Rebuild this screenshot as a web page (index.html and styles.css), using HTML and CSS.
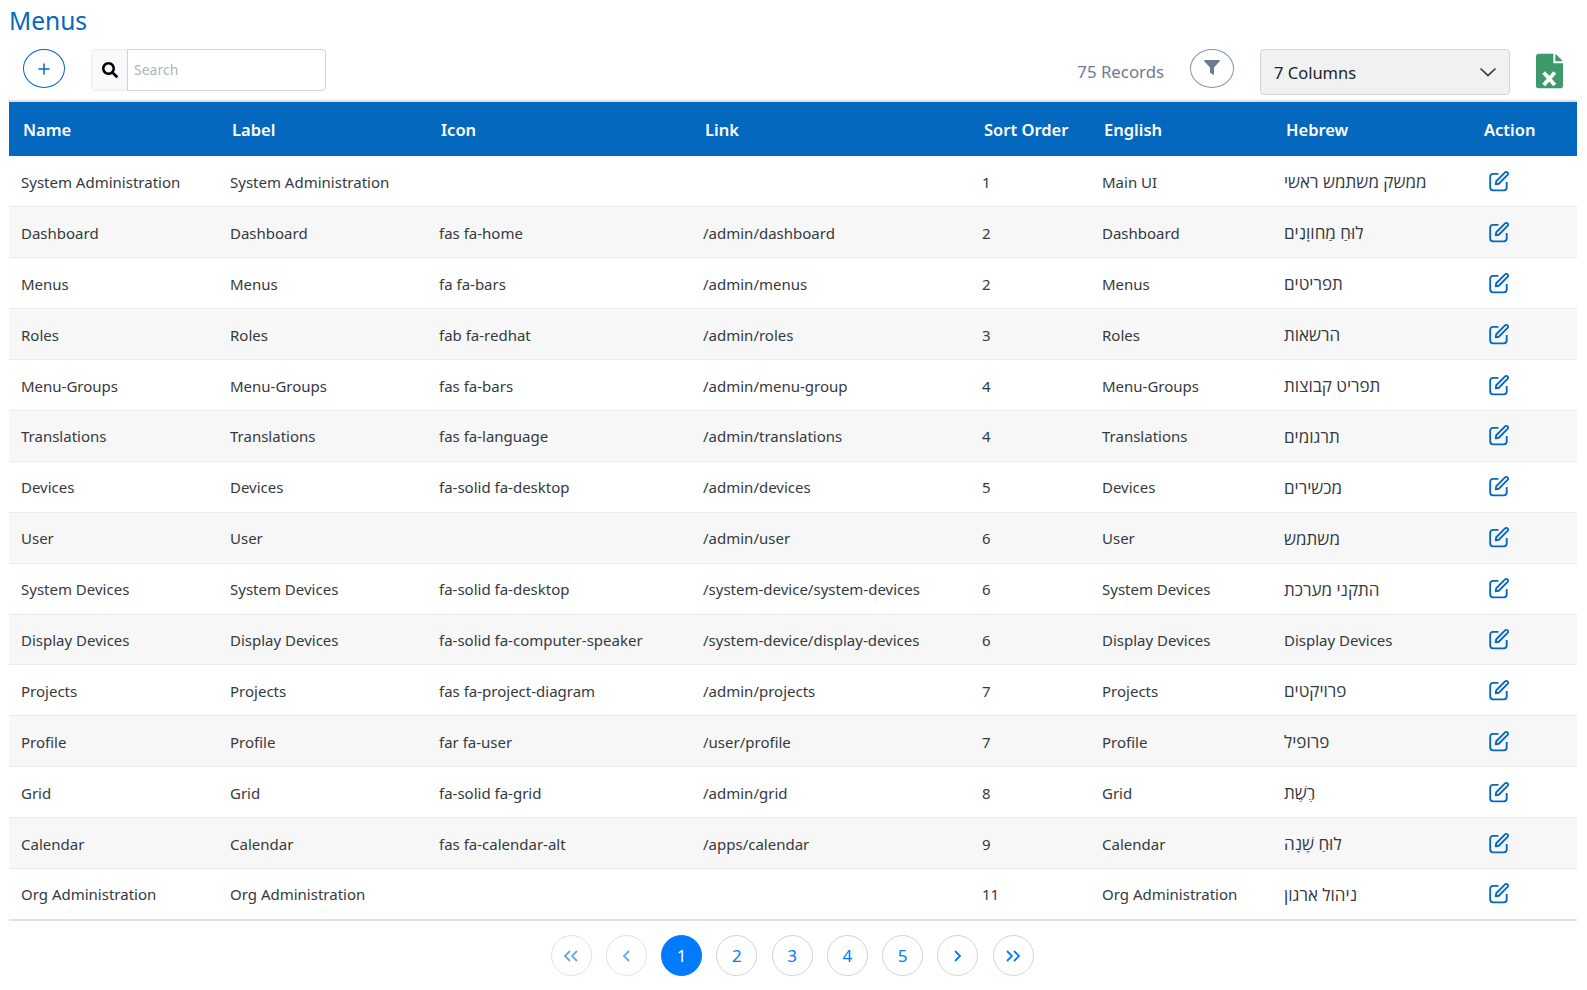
FILE: index.html
```html
<!DOCTYPE html>
<html lang="en">
<head>
<meta charset="utf-8">
<title>Menus</title>
<link rel="stylesheet" href="styles.css">
</head>
<body>
<main class="page">
<h1 class="title">Menus</h1>
<div class="toolbar">
  <button class="add-btn" aria-label="Add"><svg width="14" height="14" viewBox="0 0 14 14"><path d="M7 1.500v11M1.500 7h11" fill="none" stroke="#0468bf" stroke-width="1.500"/></svg></button>
  <div class="search">
    <span class="search-icon"><svg width="16" height="16" viewBox="0 0 512 512"><path fill="#000" d="M505 442.700L405.300 343c-4.500-4.500-10.600-7-17-7H372c27.600-35.300 44-79.700 44-128C416 93.100 322.900 0 208 0S0 93.100 0 208s93.100 208 208 208c48.300 0 92.700-16.400 128-44v16.300c0 6.400 2.500 12.500 7 17l99.700 99.700c9.400 9.400 24.600 9.400 33.900 0l28.300-28.300c9.400-9.400 9.400-24.600.1-34zM208 336c-70.700 0-128-57.200-128-128 0-70.700 57.200-128 128-128 70.700 0 128 57.200 128 128 0 70.700-57.200 128-128 128z"/></svg></span>
    <input class="search-input" type="text" placeholder="Search">
  </div>
  <div class="toolbar-right">
    <span class="records">75 Records</span>
    <button class="filter-btn" aria-label="Filter"><svg width="16" height="15" viewBox="0 0 16 15"><path fill="#6c7a94" d="M.8 0h14.400c.7 0 1 .8.500 1.300L10 7.500V14c0 .7-.8 1-1.300.6L6.400 12.800a1 1 0 0 1-.4-.8V7.500L.3 1.300C-.2.800.1 0 .8 0z"/></svg></button>
    <div class="columns-select"><span>7 Columns</span><svg width="18" height="16" viewBox="0 0 18 16"><path d="M1.500 4.500 9 11.500l7.500-7" fill="none" stroke="#343a40" stroke-width="1.700"/></svg></div>
    <svg class="excel" width="28" height="36" viewBox="0 0 28 36"><path fill="#3f9a6b" d="M3 0h15v10h10v23a3 3 0 0 1-3 3H3a3 3 0 0 1-3-3V3a3 3 0 0 1 3-3z"/><path fill="#3f9a6b" d="M20 0l8 8h-8z"/><path d="M8 19.500 19.500 32.500M19.500 19.500 8 32.500" fill="none" stroke="#fff" stroke-width="4"/></svg>
  </div>
</div>
<table class="grid">
<colgroup>
<col class="c-name"><col class="c-label"><col class="c-icon"><col class="c-link"><col class="c-sort"><col class="c-eng"><col class="c-heb"><col class="c-act">
</colgroup>
<thead>
<tr><th>Name</th><th>Label</th><th>Icon</th><th>Link</th><th>Sort Order</th><th>English</th><th>Hebrew</th><th>Action</th></tr>
</thead>
<tbody>
<tr><td>System Administration</td><td>System Administration</td><td></td><td></td><td>1</td><td>Main UI</td><td class="he">ממשק משתמש ראשי</td><td><svg class="edit"><use href="#edit"/></svg></td></tr>
<tr><td>Dashboard</td><td>Dashboard</td><td>fas fa-home</td><td>/admin/dashboard</td><td>2</td><td>Dashboard</td><td class="he">לוּחַ מַחווָנִים</td><td><svg class="edit"><use href="#edit"/></svg></td></tr>
<tr><td>Menus</td><td>Menus</td><td>fa fa-bars</td><td>/admin/menus</td><td>2</td><td>Menus</td><td class="he">תפריטים</td><td><svg class="edit"><use href="#edit"/></svg></td></tr>
<tr><td>Roles</td><td>Roles</td><td>fab fa-redhat</td><td>/admin/roles</td><td>3</td><td>Roles</td><td class="he">הרשאות</td><td><svg class="edit"><use href="#edit"/></svg></td></tr>
<tr><td>Menu-Groups</td><td>Menu-Groups</td><td>fas fa-bars</td><td>/admin/menu-group</td><td>4</td><td>Menu-Groups</td><td class="he">תפריט קבוצות</td><td><svg class="edit"><use href="#edit"/></svg></td></tr>
<tr><td>Translations</td><td>Translations</td><td>fas fa-language</td><td>/admin/translations</td><td>4</td><td>Translations</td><td class="he">תרגומים</td><td><svg class="edit"><use href="#edit"/></svg></td></tr>
<tr><td>Devices</td><td>Devices</td><td>fa-solid fa-desktop</td><td>/admin/devices</td><td>5</td><td>Devices</td><td class="he">מכשירים</td><td><svg class="edit"><use href="#edit"/></svg></td></tr>
<tr><td>User</td><td>User</td><td></td><td>/admin/user</td><td>6</td><td>User</td><td class="he">משתמש</td><td><svg class="edit"><use href="#edit"/></svg></td></tr>
<tr><td>System Devices</td><td>System Devices</td><td>fa-solid fa-desktop</td><td>/system-device/system-devices</td><td>6</td><td>System Devices</td><td class="he">התקני מערכת</td><td><svg class="edit"><use href="#edit"/></svg></td></tr>
<tr><td>Display Devices</td><td>Display Devices</td><td>fa-solid fa-computer-speaker</td><td>/system-device/display-devices</td><td>6</td><td>Display Devices</td><td>Display Devices</td><td><svg class="edit"><use href="#edit"/></svg></td></tr>
<tr><td>Projects</td><td>Projects</td><td>fas fa-project-diagram</td><td>/admin/projects</td><td>7</td><td>Projects</td><td class="he">פרויקטים</td><td><svg class="edit"><use href="#edit"/></svg></td></tr>
<tr><td>Profile</td><td>Profile</td><td>far fa-user</td><td>/user/profile</td><td>7</td><td>Profile</td><td class="he">פרופיל</td><td><svg class="edit"><use href="#edit"/></svg></td></tr>
<tr><td>Grid</td><td>Grid</td><td>fa-solid fa-grid</td><td>/admin/grid</td><td>8</td><td>Grid</td><td class="he">רֶשֶׁת</td><td><svg class="edit"><use href="#edit"/></svg></td></tr>
<tr><td>Calendar</td><td>Calendar</td><td>fas fa-calendar-alt</td><td>/apps/calendar</td><td>9</td><td>Calendar</td><td class="he">לוּחַ שָׁנָה</td><td><svg class="edit"><use href="#edit"/></svg></td></tr>
<tr><td>Org Administration</td><td>Org Administration</td><td></td><td></td><td>11</td><td>Org Administration</td><td class="he">ניהול ארגון</td><td><svg class="edit"><use href="#edit"/></svg></td></tr>
</tbody>
</table>
<nav class="pager">
  <a class="page-btn muted"><svg width="16" height="12" viewBox="0 0 16 12"><path d="M7 1 2 6l5 5M14 1 9 6l5 5" fill="none" stroke="currentColor" stroke-width="1.800"/></svg></a>
  <a class="page-btn muted"><svg width="9" height="12" viewBox="0 0 9 12"><path d="M7 1 2 6l5 5" fill="none" stroke="currentColor" stroke-width="1.800"/></svg></a>
  <a class="page-btn active">1</a>
  <a class="page-btn">2</a>
  <a class="page-btn">3</a>
  <a class="page-btn">4</a>
  <a class="page-btn">5</a>
  <a class="page-btn"><svg width="9" height="12" viewBox="0 0 9 12"><path d="m2 1 5 5-5 5" fill="none" stroke="currentColor" stroke-width="1.800"/></svg></a>
  <a class="page-btn"><svg width="16" height="12" viewBox="0 0 16 12"><path d="m2 1 5 5-5 5M9 1l5 5-5 5" fill="none" stroke="currentColor" stroke-width="1.800"/></svg></a>
</nav>
</main>
<svg class="defs" width="0" height="0"><symbol id="edit" viewBox="0 0 20 20"><path d="M9.500 3.500H4.500A2.500 2.500 0 0 0 2 6v10a2.500 2.500 0 0 0 2.500 2.500h10A2.500 2.500 0 0 0 17 16v-5" fill="none" stroke="#0468bf" stroke-width="1.700"/><path d="M7.500 10.200 15.500 2.200a1.600 1.600 0 0 1 2.300 0 1.600 1.600 0 0 1 0 2.300L9.800 12.500 7 13z" fill="none" stroke="#0468bf" stroke-width="1.700" stroke-linejoin="round"/></symbol></svg>
</body>
</html>
```
FILE: styles.css
```css
* { box-sizing: border-box; }
html, body { margin: 0; padding: 0; background: #fff; }
body { font-family: "Noto Sans", "Open Sans", "DejaVu Sans", sans-serif; color: #212529; font-size: 15px; }
.page { padding: 0 10px 0 9px; }
.title { margin: 0; height: 46px; padding-top: 3px; font-size: 24.500px; line-height: 36px; font-weight: 400; color: #0468bf; }
.toolbar { display: flex; align-items: flex-start; height: 56px; padding: 3px 0 0 14px; border-bottom: 2px solid #dee2e6; }
.add-btn { width: 42px; height: 39px; border: 1px solid #0468bf; border-radius: 50%; background: #fff; padding: 0; display: flex; align-items: center; justify-content: center; margin-right: 26px; }
.search { display: flex; height: 42px; width: 235px; }
.search-icon { width: 36px; background: #f8f9fa; border: 1px solid #e9ecef; border-right: 0; border-radius: 4px 0 0 4px; display: flex; align-items: center; justify-content: center; }
.search-input { flex: 1; min-width: 0; border: 1px solid #ced4da; border-radius: 0 4px 4px 0; padding: 0 6px 2px; font: inherit; font-size: 14px; outline: none; }
.search-input::placeholder { color: #adb5bd; }
.toolbar-right { margin-left: auto; display: flex; align-items: flex-start; }
.records { color: #6c7a94; font-size: 16.800px; line-height: 46px; margin-right: 26px; }
.filter-btn { width: 44px; height: 39px; border: 1px solid #8a94a8; border-radius: 50%; background: #fff; padding: 0 0 2px; display: flex; align-items: center; justify-content: center; margin-right: 26px; }
.columns-select { width: 250px; height: 46px; background: #f1f1f1; border: 1px solid #ced4da; border-radius: 4px; display: flex; align-items: center; justify-content: space-between; padding: 0 12px 0 13px; font-size: 16.500px; margin-right: 26px; }
.excel { margin: 4px 14px 0 0; width: 27px; }
.grid { width: 100%; border-collapse: collapse; table-layout: fixed; font-size: 15px; }
.c-name { width: 209px; } .c-label { width: 209px; } .c-icon { width: 264px; } .c-link { width: 279px; }
.c-sort { width: 120px; } .c-eng { width: 182px; } .c-heb { width: 198px; } .c-act { width: auto; }
.grid th { background: #0468bf; color: #fff; text-align: left; font-size: 16.500px; font-weight: 600; height: 54px; padding: 0 0 0 14px; }
.grid td { height: 50.900px; padding: 1px 0 0 12px; border-bottom: 1px solid #e9ecef; color: #343a40; white-space: nowrap; }
.grid td.he { font-family: "Open Sans", "DejaVu Sans", sans-serif; font-size: 17px; }
.grid tbody tr:nth-child(even) td { background: #f7f7f7; }
.grid tbody tr:last-child td { height: 51.900px; padding-bottom: 1px; border-bottom: 2px solid #dee2e6; }
.edit { display: block; width: 22px; height: 22px; margin: -2px 0 0 6px; }
.defs { position: absolute; }
.pager { display: flex; justify-content: center; gap: 14.250px; padding: 14px 2px 0 0; }
.page-btn { width: 41px; height: 41px; border: 1px solid #ced4da; border-radius: 50%; display: flex; align-items: center; justify-content: center; color: #007bff; font-size: 17px; }
.page-btn.muted { color: #66a9f5; border-color: #dee2e6; }
.page-btn.active { background: #007bff; border-color: #007bff; color: #fff; }
```
